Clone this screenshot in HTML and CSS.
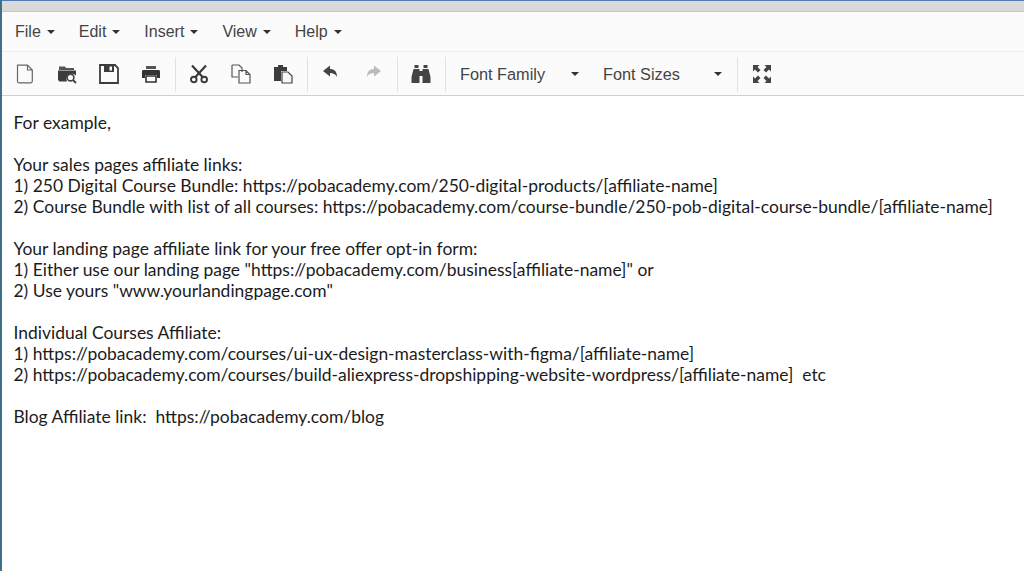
FILE: index.html
```html
<!DOCTYPE html>
<html lang="en">
<head>
<meta charset="utf-8">
<title>Editor</title>
<link rel="stylesheet" href="styles.css">
</head>
<body>
<div class="topbar"></div>
<div class="window">
  <nav class="menubar">
    <span class="menu">File<i class="caret"></i></span>
    <span class="menu">Edit<i class="caret"></i></span>
    <span class="menu">Insert<i class="caret"></i></span>
    <span class="menu">View<i class="caret"></i></span>
    <span class="menu">Help<i class="caret"></i></span>
  </nav>
  <div class="toolbar">
    <div class="group g1">
      <svg class="ico" viewBox="0 0 20 20"><path d="M2.500 1.200h10l4.800 4.800v11.300a1.500 1.500 0 0 1-1.500 1.500H4a1.500 1.500 0 0 1-1.500-1.500z M12.500 1.200v4.800h4.800" fill="none" stroke="#666" stroke-width="1.200"/></svg>
      <svg class="ico" viewBox="0 0 20 20"><path d="M2 2.500h6l1 1.500h8v2H2z" fill="#555"/><path d="M1 6.500h18v5a5.500 5.500 0 0 0-9 6H2.500L1 16z" fill="#3c3c3c"/><circle cx="13.500" cy="13.500" r="3.400" fill="#f8f8f8" stroke="#444" stroke-width="1.600"/><path d="M16 16l3 3" stroke="#444" stroke-width="2"/></svg>
      <svg class="ico" viewBox="0 0 20 20"><path d="M1 1h15l3 3v15H1z" fill="none" stroke="#3c3c3c" stroke-width="1.800"/><path d="M5 1h10v7H5z" fill="#3c3c3c"/><path d="M10.500 2.500h2.500v4h-2.500z" fill="#f8f8f8"/></svg>
      <svg class="ico" viewBox="0 0 20 20"><path d="M5 2h10v3H5z" fill="#555"/><path d="M2 6h16a1.500 1.500 0 0 1 1 1.500V14h-3v-3H4v3H1V7.500A1.500 1.500 0 0 1 2 6z" fill="#333"/><path d="M5 12h10v6H5z" fill="none" stroke="#333" stroke-width="1.600"/></svg>
    </div>
    <div class="group g2">
      <svg class="ico" viewBox="0 0 20 20"><path d="M3 1.500l11 12M17 1.500L6 13.500" stroke="#3a3a3a" stroke-width="2.200" fill="none"/><circle cx="4.800" cy="15.500" r="2.800" fill="none" stroke="#3a3a3a" stroke-width="1.900"/><circle cx="15.200" cy="15.500" r="2.800" fill="none" stroke="#3a3a3a" stroke-width="1.900"/></svg>
      <svg class="ico" viewBox="0 0 20 20"><path d="M1 1h7l3 3v4M1 1v12h6" fill="none" stroke="#555" stroke-width="1.200"/><path d="M8 6.500h7l4 4v8.500H8z M15 6.500v4h4" fill="none" stroke="#555" stroke-width="1.200"/></svg>
      <svg class="ico" viewBox="0 0 20 20"><path d="M1 3h4V1h5v2h4v4H8v10H1z" fill="#3c3c3c"/><path d="M9 8h6l4 4v7H9z" fill="#f8f8f8" stroke="#444" stroke-width="1.200"/></svg>
    </div>
    <div class="group g3">
      <svg class="ico small" viewBox="0 0 16 16"><path d="M1 7L8 1.500v3.500c4 0 7 2 7 8-1.500-3-4-4-7-4v3.500z" fill="#444"/></svg>
      <svg class="ico small" viewBox="0 0 16 16"><path d="M15 7L8 1.500v3.500c-4 0-7 2-7 8 1.500-3 4-4 7-4v3.500z" fill="#bbb"/></svg>
    </div>
    <div class="group g4">
      <svg class="ico" viewBox="0 0 20 20"><path d="M3.500 1h4v3h-4zM12.500 1h4v3h-4z" fill="#444"/><path d="M2.500 5h6v2h3V5h6l2 8v6h-8v-7h-3v7H.5v-6z" fill="#444"/></svg>
    </div>
    <div class="group g5">
      <span class="select">Font Family<i class="caret"></i></span>
      <span class="select">Font Sizes<i class="caret"></i></span>
    </div>
    <div class="group g6">
      <svg class="ico" viewBox="0 0 20 20"><path d="M1 1h6.500L5.500 3l3 3-2.500 2.500-3-3-2 2zM19 1h-6.500l2 2-3 3 2.500 2.500 3-3 2 2zM1 19h6.500l-2-2 3-3-2.500-2.500-3 3-2-2zM19 19h-6.500l2-2-3-3 2.500-2.500 3 3 2-2z" fill="#444"/></svg>
    </div>
  </div>
  <div class="content">
    <p>For example,</p>
    <p>Your sales pages affiliate links:<br>
    1) 250 Digital Course Bundle: https://pobacademy.com/250-digital-products/[affiliate-name]<br>
    2) Course Bundle with list of all courses: https://pobacademy.com/course-bundle/250-pob-digital-course-bundle/[affiliate-name]</p>
    <p>Your landing page affiliate link for your free offer opt-in form:<br>
    1) Either use our landing page "https://pobacademy.com/business[affiliate-name]" or<br>
    2) Use yours "www.yourlandingpage.com"</p>
    <p>Individual Courses Affiliate:<br>
    1) https://pobacademy.com/courses/ui-ux-design-masterclass-with-figma/[affiliate-name]<br>
    2) https://pobacademy.com/courses/build-aliexpress-dropshipping-website-wordpress/[affiliate-name]&nbsp; etc</p>
    <p>Blog Affiliate link:&nbsp; https://pobacademy.com/blog</p>
  </div>
</div>
</body>
</html>
```
FILE: styles.css
```css
html, body {
  margin: 0;
  height: 100%;
  overflow: hidden;
}
body {
  display: flex;
  flex-direction: column;
  box-sizing: border-box;
  border-left: 2px solid #3f7089;
  background: #fff;
  font-family: "Liberation Sans", Arial, sans-serif;
  color: #333;
}
.topbar {
  height: 10px;
  flex: none;
  background: #d9d9d9;
  border-top: 1px solid #4f7cb5;
  border-bottom: 1px solid #c6c6c6;
}
.window {
  flex: 1;
  display: flex;
  flex-direction: column;
  min-height: 0;
}
.menubar {
  height: 39px;
  flex: none;
  display: flex;
  align-items: center;
  gap: 24px;
  padding-left: 13px;
  background: #fbfbfb;
  border-bottom: 1px solid #eee;
  font-size: 16px;
  color: #444;
}
.menu {
  display: flex;
  align-items: center;
  gap: 6px;
}
.caret {
  display: inline-block;
  width: 0;
  height: 0;
  border-left: 4px solid transparent;
  border-right: 4px solid transparent;
  border-top: 4px solid #333;
}
.toolbar {
  height: 42px;
  padding-top: 1px;
  flex: none;
  display: flex;
  align-items: center;
  background: #fbfbfb;
  border-bottom: 1px solid #d0d0d0;
}
.group {
  height: 35px;
  display: flex;
  align-items: center;
  gap: 22px;
  border-right: 1px solid #e2e2e2;
}
.g1 { padding: 0 14px 0 13px; }
.g2 { padding: 0 14px 0 13px; }
.g3 { padding: 0 15px 0 14px; gap: 28px; }
.g4 { padding: 0 14px 0 13px; }
.g5 { padding: 0 12px 0 14px; gap: 21px; }
.g6 { padding: 0 14px; border-right: 0; }
.ico {
  width: 20px;
  height: 20px;
  flex: none;
}
.ico.small {
  width: 16px;
  height: 16px;
  margin-bottom: 4px;
}
.select {
  display: flex;
  align-items: center;
  justify-content: space-between;
  font-size: 16.300px;
  color: #444;
  padding-right: 3px;
  box-sizing: border-box;
  width: 122px;
}
.content {
  flex: 1;
  background: #fff;
  padding: 16px 12px 0 11.500px;
  font-family: Lato, sans-serif;
  font-size: 17.470px;
  line-height: 21px;
  color: #1c1c1c;
}
.content p {
  margin: 0 0 21px;
}
```
